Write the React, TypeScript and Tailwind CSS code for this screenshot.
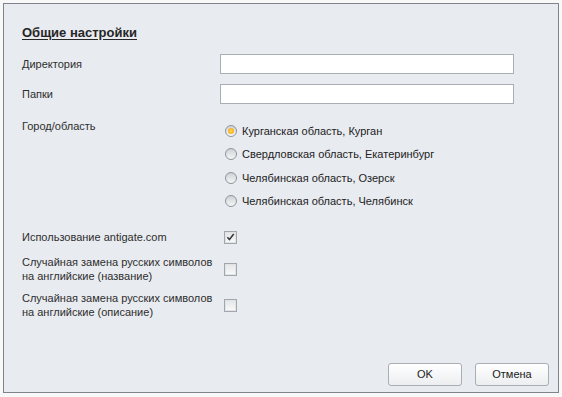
import React, { useState } from 'react';

const cities = [
  'Курганская область, Курган',
  'Свердловская область, Екатеринбург',
  'Челябинская область, Озерск',
  'Челябинская область, Челябинск',
];

const Radio: React.FC<{ checked: boolean }> = ({ checked }) => (
  <span className="w-[12px] h-[12px] rounded-full border border-[#8f959c] bg-linear-to-b from-[#cfd2d6] to-[#f6f6f6] flex items-center justify-center shrink-0">
    {checked && <span className="w-[6px] h-[6px] rounded-full bg-radial from-[#ffd84a] to-[#f0a000]" />}
  </span>
);

const Checkbox: React.FC<{ checked: boolean; onClick: () => void }> = ({ checked, onClick }) => (
  <span
    onClick={onClick}
    className="w-[13px] h-[13px] border border-[#a2a7ae] bg-[#f1f2f3] flex items-center justify-center shrink-0 cursor-pointer"
  >
    <span className="w-[11px] h-[11px] border border-[#e0e2e5] bg-linear-to-b from-[#e6e7e9] to-[#f8f8f8] flex items-center justify-center">
      {checked && (
        <svg width="10" height="10" viewBox="0 0 10 10">
          <path d="M1.5 5.2 L3.8 7.8 L8.6 1.6" fill="none" stroke="#3a3e43" strokeWidth="1.8" />
        </svg>
      )}
    </span>
  </span>
);

const App: React.FC = () => {
  const [city, setCity] = useState(0);
  const [checks, setChecks] = useState([true, false, false]);

  const toggle = (i: number) => {
    setChecks(prev => prev.map((c, j) => (j === i ? !c : c)));
  };

  return (
    <div className="w-[562px] h-[397px] bg-[#f8f8f8] pt-[3px] pl-[3px] text-[11px] text-[#2e2e2e]" style={{ fontFamily: '"Liberation Sans", Arial, sans-serif' }}>
      <div className="w-[556px] h-[390px] border border-[#7f848b] bg-[#e8ebf0] flex flex-col">
        <div className="pl-[18px] pt-[20px]">
          <div className="h-[17px] leading-[17px] text-[13px] font-bold underline underline-offset-2 text-[#262626]">
            Общие настройки
          </div>

          {/* Directory + folders */}
          <div className="mt-[13px] flex items-center h-[20px]">
            <span className="w-[198px]">Директория</span>
            <input className="w-[294px] h-[20px] border border-[#a9aeb5] bg-white outline-none" />
          </div>
          <div className="mt-[10px] flex items-center h-[20px]">
            <span className="w-[198px]">Папки</span>
            <input className="w-[294px] h-[20px] border border-[#a9aeb5] bg-white outline-none" />
          </div>

          {/* City */}
          <div className="mt-[14px] flex items-start">
            <span className="w-[198px] leading-[16px]">Город/область</span>
            <div className="pt-[1px] pl-[5px]">
              {cities.map((c, i) => (
                <div key={c} onClick={() => setCity(i)} className="h-[23.5px] flex items-center gap-[5px] cursor-pointer text-[#222]">
                  <Radio checked={city === i} />
                  <span>{c}</span>
                </div>
              ))}
            </div>
          </div>

          {/* Options */}
          <div className="mt-[16px] flex items-center h-[16px]">
            <span className="w-[198px]">Использование antigate.com</span>
            <div className="pl-[4px]">
              <Checkbox checked={checks[0]} onClick={() => toggle(0)} />
            </div>
          </div>
          <div className="mt-[10px] flex items-center h-[28px]">
            <span className="w-[198px] leading-[14px]">
              Случайная замена русских символов
              <br />
              на английские (название)
            </span>
            <div className="pl-[4px]">
              <Checkbox checked={checks[1]} onClick={() => toggle(1)} />
            </div>
          </div>
          <div className="mt-[8px] flex items-center h-[28px]">
            <span className="w-[198px] leading-[14px]">
              Случайная замена русских символов
              <br />
              на английские (описание)
            </span>
            <div className="pl-[4px]">
              <Checkbox checked={checks[2]} onClick={() => toggle(2)} />
            </div>
          </div>
        </div>

        {/* Buttons */}
        <div className="mt-auto flex justify-end gap-[13px] pr-[9px] pb-[6px]">
          <button className="w-[74px] h-[23px] rounded-[3px] border border-[#a9aeb5] bg-linear-to-b from-white to-[#eceef0] text-[#222]">
            OK
          </button>
          <button className="w-[74px] h-[23px] rounded-[3px] border border-[#a9aeb5] bg-linear-to-b from-white to-[#eceef0] text-[#222]">
            Отмена
          </button>
        </div>
      </div>
    </div>
  );
};

export default App;
